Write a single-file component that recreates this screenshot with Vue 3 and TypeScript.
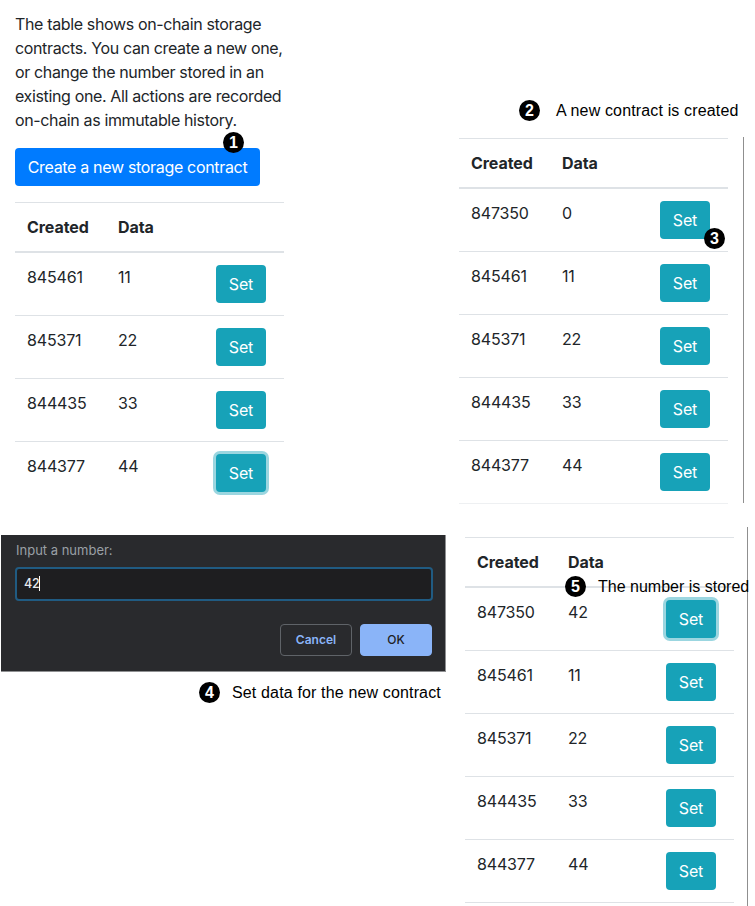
<script setup lang="ts">
import { ref } from 'vue'

interface Contract {
  created: number
  data: number
  focused?: boolean
}

interface Panel {
  name: string
  rows: Contract[]
}

const base: Contract[] = [
  { created: 845461, data: 11 },
  { created: 845371, data: 22 },
  { created: 844435, data: 33 },
  { created: 844377, data: 44 },
]

const initial: Contract[] = base.map((row) => ({ ...row, focused: row.created === 844377 }))

const panels: Panel[] = [
  { name: 'created', rows: [{ created: 847350, data: 0 }, ...base] },
  { name: 'stored', rows: [{ created: 847350, data: 42, focused: true }, ...base] },
]

const value = ref('42')
</script>

<template>
  <main class="page">
    <section class="left">
      <div class="intro">
        <p>
          The table shows on-chain storage<br />contracts. You can create a new one,<br />or change the number stored in an<br />existing one. All actions are recorded<br />on-chain as immutable history.
        </p>
        <div class="create-wrap">
          <button class="btn create">Create a new storage contract</button>
          <span class="badge on-create">1</span>
        </div>
        <div class="table">
          <div class="row head"><span>Created</span><span>Data</span></div>
          <div v-for="row in initial" :key="row.created" class="row">
            <span>{{ row.created }}</span><span>{{ row.data }}</span>
            <button class="btn set" :class="{ focused: row.focused }">Set</button>
          </div>
        </div>
      </div>

      <div class="dialog">
        <div class="label">Input a number:</div>
        <div class="field"><span>{{ value }}</span><i class="caret" /></div>
        <div class="actions">
          <button class="cancel">Cancel</button>
          <button class="ok">OK</button>
        </div>
      </div>
      <div class="caption data-caption"><span class="badge">4</span><span>Set data for the new contract</span></div>
    </section>

    <section class="right">
      <div class="caption new-caption"><span class="badge">2</span><span>A new contract is created</span></div>
      <div v-for="panel in panels" :key="panel.name" class="panel" :class="panel.name">
        <div class="table closed">
          <div class="row head"><span>Created</span><span>Data</span></div>
          <div v-for="(row, i) in panel.rows" :key="row.created" class="row">
            <span>{{ row.created }}</span><span>{{ row.data }}</span>
            <div class="set-wrap">
              <button class="btn set" :class="{ focused: row.focused }">Set</button>
              <span v-if="panel.name === 'created' && i === 0" class="badge on-set">3</span>
            </div>
          </div>
        </div>
        <div v-if="panel.name === 'stored'" class="caption stored-caption">
          <span class="badge">5</span><span>The number is stored</span>
        </div>
      </div>
    </section>
  </main>
</template>

<style>
body {
  margin: 0;
  background: #fff;
}
</style>

<style scoped>
* {
  box-sizing: border-box;
}
.page {
  display: flex;
  width: 755px;
  height: 906px;
  overflow: hidden;
  color: #212529;
  font: 400 16px/24px Inter, 'Liberation Sans', sans-serif;
  letter-spacing: -0.16px;
}
.left {
  width: 459px;
  flex: none;
}
.intro {
  height: 535px;
  padding: 12px 0 0 15px;
}
p {
  margin: 0 0 16px;
  letter-spacing: -0.36px;
  white-space: nowrap;
}
.create-wrap {
  position: relative;
  width: 245px;
  margin-bottom: 16px;
}
.btn {
  display: block;
  height: 38px;
  padding: 0;
  border: 0;
  border-radius: 4px;
  color: #fff;
  font: inherit;
  letter-spacing: inherit;
  white-space: nowrap;
}
.create {
  width: 245px;
  background: #007bff;
  letter-spacing: -0.32px;
}
.set {
  width: 50px;
  background: #17a2b8;
}
.focused {
  box-shadow: 0 0 0 3px #9bd6e0;
}
.table {
  width: 269px;
  border-top: 1px solid #dee2e6;
}
.row {
  display: grid;
  grid-template-columns: 91px 98px 50px;
  height: 63px;
  padding: 12px 0 0 12px;
  border-bottom: 1px solid #dee2e6;
}
.row:last-child {
  border-bottom: 0;
}
.closed .row:last-child {
  border-bottom: 1px solid #dee2e6;
}
.created .row:last-child {
  border-bottom-color: #eef0f2;
}
.head {
  height: 50px;
  border-bottom-width: 2px;
  font-weight: 700;
  letter-spacing: -0.06px;
}
.set-wrap {
  position: relative;
}
.badge {
  display: flex;
  align-items: center;
  justify-content: center;
  width: 21px;
  height: 21px;
  flex: none;
  border-radius: 50%;
  background: #000;
  color: #fff;
  font: 700 16px/21px 'Liberation Sans', Arial, sans-serif;
  letter-spacing: 0;
}
.on-create {
  position: absolute;
  left: 208px;
  top: -16px;
}
.on-set {
  position: absolute;
  left: 44px;
  top: 27px;
}
.dialog {
  width: 445px;
  height: 137px;
  margin-left: 1px;
  padding: 7px 13px 0 14px;
  border-right: 1px solid #8f9092;
  border-bottom: 1px solid #8f9092;
  background: #292a2d;
  font-size: 13px;
  letter-spacing: 0;
}
.label {
  height: 25px;
  padding-left: 1px;
  color: #9aa0a6;
  line-height: 17px;
}
.field {
  display: flex;
  align-items: center;
  width: 418px;
  height: 34px;
  padding: 0 0 1px 7px;
  border: 2px solid #205b82;
  border-radius: 4px;
  background: #1e1e20;
  color: #e8eaed;
  font-size: 12.5px;
  font-weight: 500;
  letter-spacing: -0.3px;
}
.caret {
  width: 1px;
  height: 15px;
  background: #fff;
}
.actions {
  display: flex;
  justify-content: flex-end;
  gap: 8px;
  margin: 23px 0 0;
}
.actions button {
  width: 72px;
  height: 32px;
  padding: 0;
  border: 1px solid #5f6368;
  border-radius: 4px;
  background: transparent;
  color: #8ab4f8;
  font: 600 12px/16px Inter, sans-serif;
}
.actions .ok {
  border-color: #8ab4f8;
  background: #8ab4f8;
  color: #202124;
  font-weight: 500;
}
.caption {
  display: flex;
  align-items: center;
  height: 21px;
  color: #000;
  font: 16px/21px 'Liberation Sans', Arial, sans-serif;
  letter-spacing: 0.15px;
  white-space: nowrap;
}
.data-caption {
  gap: 12px;
  margin: 10px 0 0 199px;
}
.right {
  flex: none;
  width: 296px;
  padding-top: 100px;
}
.new-caption {
  gap: 16px;
  margin: 0 0 16px 60px;
}
.panel {
  border-right: 1px solid #8f8f8f;
}
.created {
  width: 285px;
  height: 366px;
  padding-top: 1px;
}
.stored {
  position: relative;
  width: 283px;
  height: 379px;
  margin: 24px 0 0 6px;
  padding-top: 10px;
}
.stored-caption {
  position: absolute;
  left: 100px;
  top: 49px;
  gap: 12px;
  letter-spacing: 0;
}
</style>
